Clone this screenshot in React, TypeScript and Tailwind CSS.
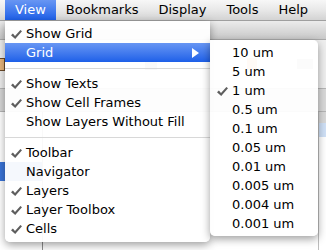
import { ReactNode } from "react";

type Row = { label: string; checked?: boolean; active?: boolean; sub?: boolean } | "sep";

const viewItems: Row[] = [
  { label: "Show Grid", checked: true },
  { label: "Grid", active: true, sub: true },
  "sep",
  { label: "Show Texts", checked: true },
  { label: "Show Cell Frames", checked: true },
  { label: "Show Layers Without Fill" },
  "sep",
  { label: "Toolbar", checked: true },
  { label: "Navigator" },
  { label: "Layers", checked: true },
  { label: "Layer Toolbox", checked: true },
  { label: "Cells", checked: true },
];

const gridItems = [
  "10 um",
  "5 um",
  "1 um",
  "0.5 um",
  "0.1 um",
  "0.05 um",
  "0.01 um",
  "0.005 um",
  "0.004 um",
  "0.001 um",
];

// heavy grey tick, like the Aqua menu check
function Check() {
  return (
    <svg width="11" height="9" viewBox="0 0 11 9" className="mt-[1px]">
      <path d="M0 5.2 L1.9 3.6 L4 6 L9.4 0 L11 1.3 L4.2 9 Z" fill="#5e5e5e" />
    </svg>
  );
}

function MenuRow({ children, check, active, indent }: { children: ReactNode; check?: boolean; active?: boolean; indent: string }) {
  return (
    <div
      className={
        "h-[19px] flex items-center text-[13px] " +
        (active ? "bg-gradient-to-b from-[#6896f3] to-[#1d5fe8] text-white" : "text-black")
      }
    >
      <div className={indent + " flex items-center shrink-0"}>{check && <Check />}</div>
      {children}
    </div>
  );
}

function MenuBar() {
  const items = ["View", "Bookmarks", "Display", "Tools", "Help"];
  return (
    <div className="h-[21px] flex items-center pl-[5px] bg-gradient-to-b from-[#f7f7f7] via-[#e8e8e8] to-[#d3d3d3] border-b border-[#9f9f9f]">
      {items.map((m, i) => (
        <div
          key={m}
          className={
            "h-full flex items-center px-[10px] text-[13px] " +
            (i === 0 ? "bg-gradient-to-b from-[#6896f3] to-[#1d5fe8] text-white" : "text-black")
          }
        >
          {m}
        </div>
      ))}
    </div>
  );
}

function Window() {
  return (
    <div className="flex flex-col flex-1">
      <div className="h-[19px] bg-gradient-to-b from-[#ececec] via-[#dadada] to-[#c9c9c9] border-b border-[#a9a9a9]" />
      <div className="h-[48px] bg-[#eeeeee] flex items-center gap-[40px] pl-[2px]">
        <div className="w-[14px] h-[13px] -ml-[11px] border border-[#6b4a2a] bg-[#e8b77c]" />
        <div className="w-[12px] h-[12px] bg-[#9a9a9a] ml-[100px]" />
        <div className="w-[10px] h-[12px] bg-[#f09a4a] ml-[50px]" />
        <div className="w-[16px] h-[10px] bg-[#b0b0b0]" />
      </div>
      <div className="h-[24px] bg-[#d6d6d6] border-t border-[#b5b5b5] border-b flex justify-end">
        <div className="w-[8px] bg-[#d9d9d9]" />
      </div>
      <div className="flex flex-1">
        <div className="w-[43px] border-r border-[#8e8e8e] flex flex-col">
          <div className="h-[50px]" />
          <div className="h-[19px] bg-[#3a74d8]" />
        </div>
        <div className="flex-1" />
        <div className="w-[8px] flex flex-col border-l border-[#bdbdbd]">
          <div className="h-[11px] bg-[#d8d8d8]" />
          <div className="h-[14px] bg-[#cfe0f6]" />
        </div>
      </div>
    </div>
  );
}

export default function App() {
  return (
    <div className="relative w-[326px] h-[250px] overflow-hidden bg-white flex flex-col font-['DejaVu_Sans',sans-serif] select-none">
      <MenuBar />
      <Window />

      {/* View menu */}
      <div className="absolute left-[5px] top-[21px] w-[205px] pt-[3px] pb-[4px] bg-white/95 rounded-b-[5px] shadow-[0_3px_9px_rgba(0,0,0,0.38)]">
        {viewItems.map((it, i) =>
          it === "sep" ? (
            <div key={i} className="h-[12px] flex items-center">
              <div className="h-px w-full bg-[#d8d8d8]" />
            </div>
          ) : (
            <MenuRow key={i} check={it.checked} active={it.active} indent="w-[21px] pl-[6px]">
              <span>{it.label}</span>
              {it.sub && (
                <svg className="ml-auto mr-[11px]" width="7" height="10" viewBox="0 0 7 10">
                  <polygon points="0,0 7,5 0,10" fill="#ffffff" />
                </svg>
              )}
            </MenuRow>
          )
        )}
      </div>

      {/* Grid submenu */}
      <div className="absolute left-[210px] top-[40px] w-[108px] py-[3px] bg-white/95 rounded-tr-[5px] rounded-b-[5px] shadow-[0_3px_9px_rgba(0,0,0,0.38)]">
        {gridItems.map((g) => (
          <MenuRow key={g} check={g === "1 um"} indent="w-[22px] pl-[7px]">
            <span>{g}</span>
          </MenuRow>
        ))}
      </div>
    </div>
  );
}
